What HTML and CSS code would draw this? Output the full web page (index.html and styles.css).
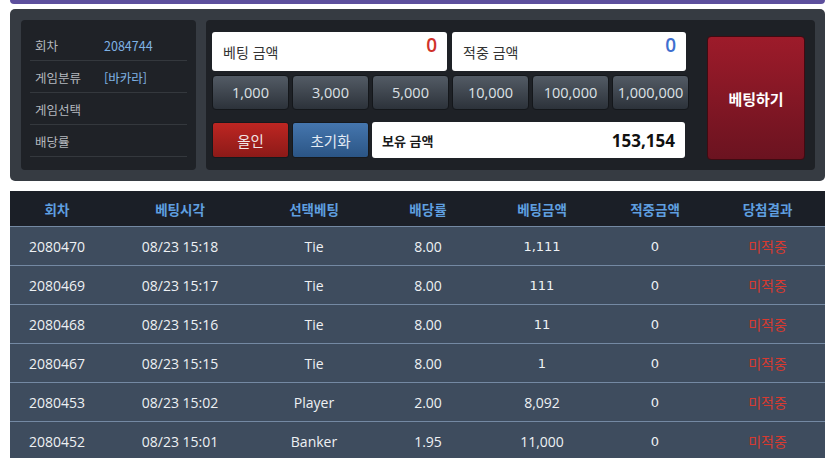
FILE: index.html
```html
<!DOCTYPE html>
<html lang="ko">
<head>
<meta charset="utf-8">
<title>베팅</title>
<link rel="stylesheet" href="styles.css">
</head>
<body>
<div class="topbar"></div>
<div class="panel">
  <div class="info">
    <div class="info-row"><span class="info-label">회차</span><span class="info-value">2084744</span></div>
    <div class="info-row"><span class="info-label">게임분류</span><span class="info-value">[바카라]</span></div>
    <div class="info-row"><span class="info-label">게임선택</span><span class="info-value"></span></div>
    <div class="info-row"><span class="info-label">배당률</span><span class="info-value"></span></div>
  </div>
  <div class="bet">
    <div class="bet-main">
      <div class="amounts">
        <div class="field"><span class="field-label">베팅 금액</span><span class="field-value red">0</span></div>
        <div class="field"><span class="field-label">적중 금액</span><span class="field-value blue">0</span></div>
      </div>
      <div class="chips">
        <button class="chip">1,000</button>
        <button class="chip">3,000</button>
        <button class="chip">5,000</button>
        <button class="chip">10,000</button>
        <button class="chip">100,000</button>
        <button class="chip">1,000,000</button>
      </div>
      <div class="actions">
        <button class="act act-red">올인</button>
        <button class="act act-blue">초기화</button>
        <div class="balance"><span class="balance-label">보유 금액</span><span class="balance-value">153,154</span></div>
      </div>
    </div>
    <button class="submit">베팅하기</button>
  </div>
</div>
<table class="history">
  <colgroup>
    <col class="c1"><col class="c2"><col class="c3"><col class="c4"><col class="c5"><col class="c6"><col class="c7">
  </colgroup>
  <thead>
    <tr><th>회차</th><th>베팅시각</th><th>선택베팅</th><th>배당률</th><th>베팅금액</th><th>적중금액</th><th>당첨결과</th></tr>
  </thead>
  <tbody>
    <tr><td>2080470</td><td>08/23 15:18</td><td>Tie</td><td>8.00</td><td class="num">1,111</td><td class="num">0</td><td class="lose">미적중</td></tr>
    <tr><td>2080469</td><td>08/23 15:17</td><td>Tie</td><td>8.00</td><td class="num">111</td><td class="num">0</td><td class="lose">미적중</td></tr>
    <tr><td>2080468</td><td>08/23 15:16</td><td>Tie</td><td>8.00</td><td class="num">11</td><td class="num">0</td><td class="lose">미적중</td></tr>
    <tr><td>2080467</td><td>08/23 15:15</td><td>Tie</td><td>8.00</td><td class="num">1</td><td class="num">0</td><td class="lose">미적중</td></tr>
    <tr><td>2080453</td><td>08/23 15:02</td><td>Player</td><td>2.00</td><td>8,092</td><td class="num">0</td><td class="lose">미적중</td></tr>
    <tr><td>2080452</td><td>08/23 15:01</td><td>Banker</td><td>1.95</td><td>11,000</td><td class="num">0</td><td class="lose">미적중</td></tr>
  </tbody>
</table>
</body>
</html>
```
FILE: styles.css
```css
html, body {
  margin: 0;
  padding: 0;
  background: #ffffff;
}
body {
  padding: 0 10px;
  font-family: "Open Sans", "Noto Sans CJK KR", sans-serif;
  overflow: hidden;
}
.topbar {
  height: 4px;
  background: #5d4f9d;
  border-radius: 0 0 4px 4px;
}
.panel {
  margin-top: 5px;
  height: 172px;
  box-sizing: border-box;
  background: #363b42;
  border-radius: 5px;
  padding: 11px 10px 11px 11px;
  display: flex;
  gap: 10px;
}
.info {
  width: 176px;
  height: 150px;
  box-sizing: border-box;
  background: #1f2227;
  border-radius: 4px;
  padding: 9px 9px 0 9px;
}
.info-row {
  height: 32px;
  box-sizing: border-box;
  border-bottom: 1px solid #34383d;
  display: flex;
  align-items: center;
  padding-left: 5px;
  padding-top: 2px;
  font-family: "Noto Sans CJK KR", sans-serif;
  font-size: 12.5px;
}
.info-label {
  width: 69px;
  color: #b4b8be;
}
.info-value {
  color: #7fb2e4;
}
.bet {
  flex: 1;
  height: 150px;
  box-sizing: border-box;
  background: #1e2126;
  border-radius: 4px;
  padding: 12px 10px 12px 6px;
  display: flex;
}
.bet-main {
  width: 477px;
  display: flex;
  flex-direction: column;
}
.amounts {
  display: flex;
  gap: 5px;
}
.field {
  width: 235px;
  height: 39px;
  box-sizing: border-box;
  background: #ffffff;
  border-radius: 3px;
  display: flex;
  justify-content: space-between;
  padding: 0 10px 0 11px;
}
.field + .field {
  width: 234px;
}
.field-label {
  font-family: "Noto Sans CJK KR", sans-serif;
  font-size: 14px;
  color: #333333;
  padding-top: 10px;
}
.field-value {
  font-family: "Open Sans", sans-serif;
  font-size: 19px;
  font-weight: 600;
  line-height: 26px;
}
.red { color: #d0322a; }
.blue { color: #3f6fcf; }
.chips {
  margin-top: 4px;
  display: flex;
  gap: 3px;
}
.chip {
  width: 77px;
  height: 35px;
  padding: 0;
  border: 1px solid #14171b;
  border-radius: 4px;
  background: linear-gradient(#535b65, #2c323a);
  color: #dde1e6;
  font-family: "Open Sans", sans-serif;
  font-size: 14.5px;
}
.actions {
  margin-top: 12px;
  display: flex;
  gap: 3px;
}
.act {
  width: 77px;
  height: 36px;
  padding: 0;
  border: 1px solid #16191d;
  border-radius: 3px;
  font-family: "Noto Sans CJK KR", sans-serif;
  font-size: 14.5px;
  color: #f1e6e6;
}
.act-red {
  background: linear-gradient(#bd2622, #8c1a18);
}
.act-blue {
  background: linear-gradient(#4576ae, #2b5585);
  color: #e3ebf5;
}
.balance {
  width: 313px;
  height: 36px;
  box-sizing: border-box;
  background: #ffffff;
  border-radius: 3px;
  display: flex;
  align-items: center;
  justify-content: space-between;
  padding: 0 10px;
}
.balance-label {
  font-family: "Noto Sans CJK KR", sans-serif;
  font-weight: 700;
  font-size: 13px;
  color: #1a1a1a;
}
.balance-value {
  font-family: "Open Sans", sans-serif;
  font-weight: 700;
  font-size: 17px;
  color: #111111;
}
.submit {
  margin: 4px 0 0 18px;
  width: 98px;
  height: 124px;
  padding: 0;
  border: 1px solid #3f0b12;
  border-radius: 4px;
  background: linear-gradient(#9d1b2a, #6b1320);
  color: #ffffff;
  font-family: "Noto Sans CJK KR", sans-serif;
  font-weight: 700;
  font-size: 15px;
}
.history {
  margin-top: 10px;
  width: 815px;
  border-collapse: collapse;
  table-layout: fixed;
}
.c1 { width: 94px; }
.c2 { width: 152px; }
.c3 { width: 116px; }
.c4 { width: 112px; }
.c5 { width: 116px; }
.c6 { width: 110px; }
.c7 { width: 115px; }
.history th {
  height: 35px;
  padding: 0;
  background: #1b1f27;
  color: #5f9fe0;
  font-family: "Noto Sans CJK KR", sans-serif;
  font-weight: 700;
  font-size: 13.5px;
  text-align: center;
}
.history td {
  height: 38px;
  padding: 0;
  background: #3e4c5e;
  border-top: 1px solid #7489a3;
  color: #eef1f4;
  font-family: "Open Sans", sans-serif;
  font-size: 14px;
  text-align: center;
}
.history td.num {
  font-family: "DejaVu Sans", sans-serif;
  font-size: 13px;
}
.history td.lose {
  color: #d83a30;
  font-family: "Noto Sans CJK KR", sans-serif;
  font-size: 14px;
}
```
